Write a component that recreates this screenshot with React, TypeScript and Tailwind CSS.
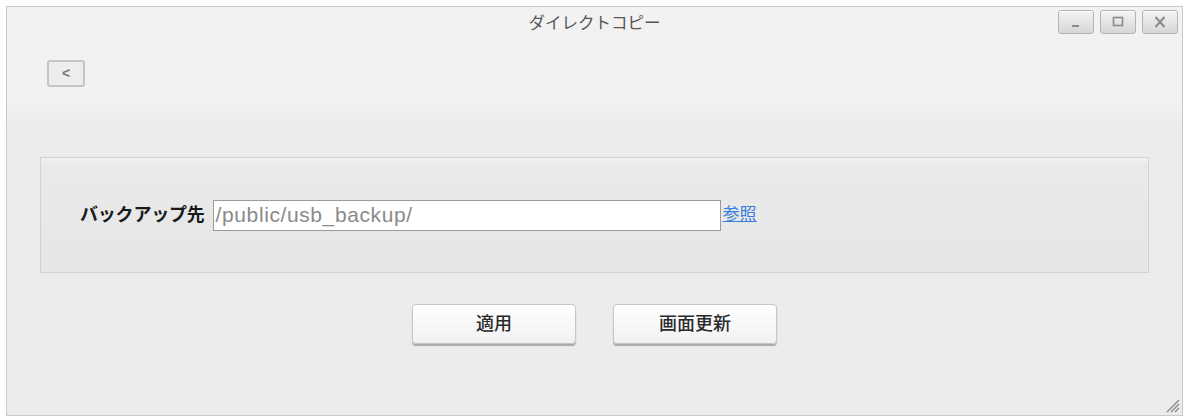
import React from 'react';

const font = '"Liberation Sans", "Noto Sans CJK JP", sans-serif';

const WinButton = ({ kind }: { kind: 'min' | 'max' | 'close' }) => (
  <div className="w-[36px] h-[24px] rounded-[3px] border border-[#b4b4b4] bg-gradient-to-b from-[#f4f4f4] to-[#d6d6d6] flex items-center justify-center shadow-[inset_0_1px_0_#fff]">
    <svg width="16" height="14" viewBox="0 0 16 14" fill="none" stroke="#8a8a8a" strokeWidth="2">
      {kind === 'min' && <path d="M4 11h7" />}
      {kind === 'max' && <rect x="3.5" y="2.5" width="9" height="8" strokeWidth="1.6" />}
      {kind === 'close' && <path d="M3.5 2l9 10M12.5 2l-9 10" />}
    </svg>
  </div>
);

const ActionButton = ({ label }: { label: string }) => (
  <button className="w-[164px] h-[40px] rounded-[4px] border border-[#c6c6c6] bg-gradient-to-b from-[#ffffff] to-[#f1f1f1] shadow-[0_2px_1px_#a9a9a9] text-[18px] font-medium text-[#2a2a2a]">
    {label}
  </button>
);

export default function App() {
  return (
    <div className="w-[1185px] h-[418px] bg-white p-[6px]" style={{ fontFamily: font }}>
      <div className="relative w-[1177px] h-[410px] border border-[#c9c9c9] bg-[#ececec] flex flex-col">
        {/* header */}
        <div className="h-[118px] bg-gradient-to-b from-[#f2f2f2] from-80% to-[#ededed]">
          <div className="grid grid-cols-[1fr_auto_1fr] items-start pt-[3px] px-[4px]">
            <div />
            <div className="text-[16.5px] leading-[22px] text-[#555] pt-[2px]">ダイレクトコピー</div>
            <div className="flex justify-end gap-[6px]">
              <WinButton kind="min" />
              <WinButton kind="max" />
              <WinButton kind="close" />
            </div>
          </div>
          <div className="pl-[40px]">
            <button className="mt-[26px] w-[38px] h-[27px] rounded-[3px] border-2 border-[#c4c4c4] bg-[#ededed] text-[#777] text-[14px] font-bold flex items-center justify-center">
              &lt;
            </button>
          </div>
        </div>

        {/* settings panel */}
        <div className="mt-[32px] mx-[33px] h-[116px] border border-[#d2d2d2] bg-gradient-to-b from-[#eaeaea] to-[#e6e6e6] shadow-[inset_0_8px_6px_-6px_#f4f4f4] flex items-center pl-[39px]">
          <span className="text-[18px] font-bold text-[#1a1a1a] tracking-[-0.2px]">バックアップ先</span>
          <div className="ml-[8px] w-[508px] h-[31px] bg-white border border-[#9a9a9a] flex items-center pl-[2px] text-[21px] tracking-[0.6px] text-[#8a8a8a]">
            /public/usb_backup/
          </div>
          <a className="ml-[2px] text-[17px] text-[#3a7ee0] underline">参照</a>
        </div>

        {/* actions */}
        <div className="mt-[31px] flex justify-center gap-[37px]">
          <ActionButton label="適用" />
          <ActionButton label="画面更新" />
        </div>

        {/* resize grip */}
        <svg className="absolute right-[2px] bottom-[2px]" width="16" height="16" viewBox="0 0 16 16" stroke="#8c8c8c" strokeWidth="1.4">
          <path d="M3 15L15 3M7 15L15 7M11 15L15 11" />
        </svg>
      </div>
    </div>
  );
}
